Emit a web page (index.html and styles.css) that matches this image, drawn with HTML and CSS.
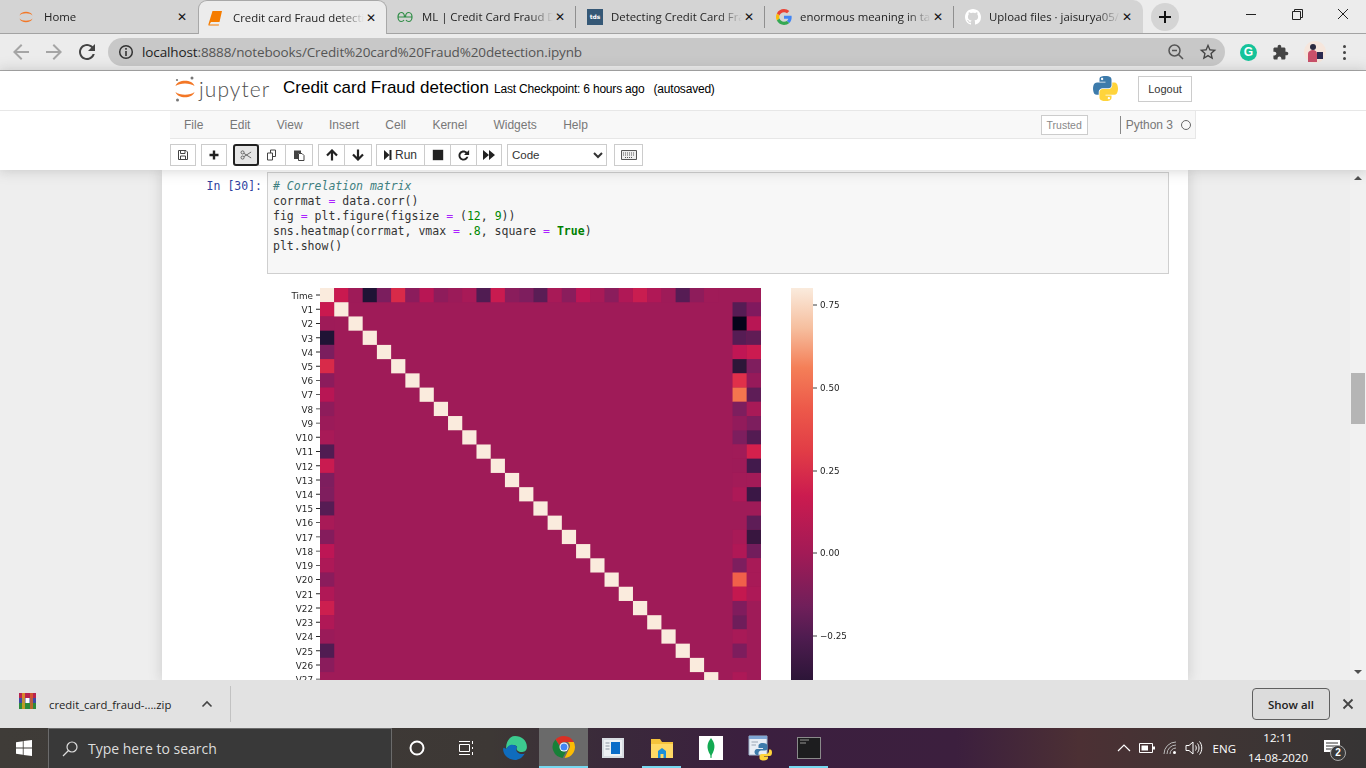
FILE: index.html
```html
<!DOCTYPE html>
<html lang="en">
<head>
<meta charset="utf-8">
<title>Credit card Fraud detection</title>
<link rel="stylesheet" href="styles.css">
</head>
<body>
<div class="tabstrip">
  <div class="tabs">
    <div class="tab first">
      <svg class="fav" viewBox="0 0 16 16"><path d="M1.5 6.5C3 1.5 13 1.500 14.500 6.500C12 3.500 4 3.500 1.500 6.500Z M1.500 9.500C3 14.500 13 14.500 14.500 9.500C12 12.500 4 12.500 1.500 9.500Z" fill="#f37726"/></svg>
      <span class="tab-title">Home</span><span class="tab-x">✕</span>
    </div>
    <div class="tab active">
      <svg class="fav" viewBox="0 0 16 16"><path d="M4.500 1H14L11.500 12H3L1.500 14.500H11L10.800 15.500H1C.5 15.500 .2 15 .5 14L4.500 1Z" fill="#f57c00"/></svg>
      <span class="tab-title">Credit card Fraud detection</span><span class="tab-x">✕</span>
    </div>
    <div class="tab gfg">
      <svg class="fav" viewBox="0 0 16 16" fill="none" stroke="#2f8d46" stroke-width="1.200"><path d="M1 8H7.500C7.500 5 6 3.500 4.200 3.500S1 5.500 1 8 2.500 12.500 4.200 12.500C5.500 12.500 6.500 11.800 7 11"/><path d="M15 8H8.500C8.500 5 10 3.500 11.800 3.500S15 5.500 15 8 13.500 12.500 11.800 12.500C10.500 12.500 9.500 11.800 9 11"/></svg>
      <span class="tab-title">ML | Credit Card Fraud Detection</span><span class="tab-x">✕</span>
    </div>
    <i class="tab-sep"></i>
    <div class="tab">
      <span class="tds"><span>tds</span></span>
      <span class="tab-title">Detecting Credit Card Fraud</span><span class="tab-x">✕</span>
    </div>
    <i class="tab-sep"></i>
    <div class="tab">
      <svg class="fav" viewBox="0 0 48 48"><path fill="#ea4335" d="M24 9.500c3.500 0 6.700 1.300 9.100 3.400l6.800-6.800C35.800 2.400 30.200 0 24 0 14.600 0 6.500 5.400 2.600 13.200l7.900 6.200C12.400 13.700 17.700 9.500 24 9.500z"/><path fill="#4285f4" d="M47 24.500c0-1.600-.2-3.100-.4-4.500H24v9h12.900c-.6 3-2.200 5.500-4.700 7.200l7.700 6C44.400 37.900 47 31.800 47 24.500z"/><path fill="#fbbc05" d="M10.500 28.600c-.5-1.500-.8-3-.8-4.600s.3-3.200.8-4.600l-7.900-6.200C.9 16.500 0 20.100 0 24s.9 7.500 2.600 10.800l7.900-6.200z"/><path fill="#34a853" d="M24 48c6.500 0 11.900-2.100 15.900-5.800l-7.700-6c-2.200 1.400-4.900 2.300-8.200 2.300-6.300 0-11.600-4.200-13.500-9.900l-7.900 6.200C6.500 42.600 14.600 48 24 48z"/></svg>
      <span class="tab-title">enormous meaning in tamil</span><span class="tab-x">✕</span>
    </div>
    <i class="tab-sep"></i>
    <div class="tab">
      <svg class="fav" viewBox="0 0 16 16"><path fill="#fff" d="M8 0C3.580 0 0 3.580 0 8c0 3.540 2.290 6.530 5.470 7.590.4.070.55-.17.55-.38 0-.19-.01-.82-.01-1.490-2.010.37-2.530-.49-2.690-.94-.09-.23-.48-.94-.82-1.130-.28-.15-.68-.52-.01-.53.63-.01 1.080.58 1.230.82.72 1.210 1.870.87 2.330.66.07-.52.28-.87.51-1.070-1.780-.2-3.640-.89-3.640-3.950 0-.87.31-1.590.82-2.150-.08-.2-.36-1.020.08-2.120 0 0 .67-.21 2.200.82.64-.18 1.320-.27 2-.27.68 0 1.360.09 2 .27 1.530-1.040 2.200-.82 2.200-.82.44 1.100.16 1.920.08 2.120.51.56.82 1.270.82 2.150 0 3.070-1.870 3.750-3.650 3.950.29.25.54.73.54 1.480 0 1.070-.01 1.930-.01 2.200 0 .21.15.46.55.38A8.013 8.013 0 0016 8c0-4.420-3.580-8-8-8z"/></svg>
      <span class="tab-title">Upload files · jaisurya05/Credit</span><span class="tab-x">✕</span>
    </div>
  </div>
  <div class="newtab"><svg viewBox="0 0 12 12" width="12" height="12"><path d="M6 0V12M0 6H12" stroke="#111" stroke-width="2"/></svg></div>
  <div class="winctl">
    <svg width="46" height="16" viewBox="0 0 46 16"><path d="M18 8.500H28" stroke="#222"/></svg>
    <svg width="46" height="16" viewBox="0 0 46 16" fill="none" stroke="#222"><path d="M18.500 5.500H26.500V13.500H18.500Z M20.500 5V3.500H28.500V11.500H27"/></svg>
    <svg width="46" height="16" viewBox="0 0 46 16" fill="none" stroke="#222"><path d="M18 3L28 13M28 3L18 13"/></svg>
  </div>
</div>

<div class="urlbar">
  <svg class="nav dim" viewBox="0 0 24 24"><path d="M20 11H7.830l5.590-5.590L12 4l-8 8 8 8 1.410-1.410L7.830 13H20v-2z"/></svg>
  <svg class="nav dim" viewBox="0 0 24 24"><path d="M4 11h12.170l-5.590-5.590L12 4l8 8-8 8-1.410-1.410L16.170 13H4v-2z"/></svg>
  <svg class="nav" viewBox="0 0 24 24"><path d="M17.650 6.350C16.200 4.900 14.210 4 12 4c-4.420 0-7.990 3.580-7.990 8s3.570 8 7.990 8c3.730 0 6.840-2.550 7.730-6h-2.080c-.82 2.330-3.040 4-5.650 4-3.310 0-6-2.690-6-6s2.690-6 6-6c1.660 0 3.140.69 4.220 1.780L13 11h7V4l-2.350 2.350z"/></svg>
  <div class="omnibox">
    <svg class="info" viewBox="0 0 16 16"><circle cx="8" cy="8" r="6.300" fill="none" stroke="#333" stroke-width="1.500"/><path d="M8 7V12M8 4V5.700" stroke="#333" stroke-width="1.600"/></svg>
    <span class="url"><b>localhost</b>:8888/notebooks/Credit%20card%20Fraud%20detection.ipynb</span>
    <svg class="omni-ic" viewBox="0 0 18 18" fill="none" stroke="#555" stroke-width="1.500"><circle cx="7.500" cy="7.500" r="5.500"/><path d="M11.500 11.500L16 16M5 7.500H10"/></svg>
    <svg class="omni-ic star" viewBox="0 0 24 24"><path fill="#444" d="M22 9.240l-7.190-.62L12 2 9.190 8.630 2 9.240l5.460 4.730L5.820 21 12 17.270 18.180 21l-1.630-7.030L22 9.240zM12 15.400l-3.760 2.270 1-4.280-3.320-2.880 4.380-.38L12 6.100l1.710 4.040 4.380.38-3.320 2.880 1 4.280L12 15.400z"/></svg>
  </div>
  <div class="ext grammarly"><span>G</span></div>
  <svg class="ext-ic" viewBox="0 0 24 24"><path fill="#444" d="M20.500 11H19V7c0-1.100-.9-2-2-2h-4V3.500C13 2.120 11.880 1 10.500 1S8 2.120 8 3.500V5H4c-1.100 0-1.990.9-1.990 2v3.800H3.500c1.490 0 2.700 1.210 2.700 2.700s-1.210 2.700-2.700 2.700H2V20c0 1.100.9 2 2 2h3.800v-1.500c0-1.490 1.210-2.700 2.700-2.700 1.490 0 2.700 1.210 2.700 2.700V22H17c1.100 0 2-.9 2-2v-4h1.500c1.380 0 2.500-1.120 2.500-2.500S21.880 11 20.500 11z"/></svg>
  <svg class="avatar" viewBox="0 0 22 22"><circle cx="11" cy="11" r="11" fill="#f6e6dc"/><circle cx="9" cy="6" r="3" fill="#2b2a40"/><path d="M4 21V13C4 10 7 9 9 9S13 10 13 13V21Z" fill="#c9506a"/><path d="M13 11H19V18H13Z" fill="#2b2a50"/></svg>
  <div class="dots"><i></i><i></i><i></i></div>
</div>

<header class="nb-header">
  <div class="hdr-row">
    <div class="hdr-inner title-row">
      <svg class="jlogo" viewBox="0 0 22 28"><path d="M1.500 11C3.500 4 18.500 4 20.500 11C16.500 7.500 5.500 7.500 1.500 11Z M1.500 17C3.500 24 18.500 24 20.500 17C16.500 20.500 5.500 20.500 1.500 17Z" fill="#f37726"/><circle cx="18" cy="3" r="1.500" fill="#777"/><circle cx="3" cy="5" r="1.100" fill="#777"/><circle cx="3.500" cy="25" r="1.500" fill="#777"/></svg>
      <span class="jword">jupyter</span>
      <span class="nb-name">Credit card Fraud detection</span>
      <span class="checkpoint">Last Checkpoint: 6 hours ago</span>
      <span class="checkpoint saved">(autosaved)</span>
      <svg class="pylogo" viewBox="0 0 111 112"><path fill="#3d7bab" d="M54.900 0C50.300 0 45.900.4 42 1.100 30.600 3.100 28.500 7.400 28.500 15.200v10.400h27v3.500H18.300c-7.800 0-14.700 4.700-16.800 13.700-2.500 10.300-2.600 16.700 0 27.400 1.900 8 6.500 13.700 14.300 13.700h9.300V71.500c0-8.900 7.700-16.800 16.800-16.800h27c7.500 0 13.500-6.200 13.500-13.700V15.200c0-7.300-6.200-12.800-13.500-14.100C64.500.4 59.500 0 54.900 0zM40.300 8.300c2.800 0 5.100 2.300 5.100 5.100s-2.300 5.100-5.100 5.100-5.100-2.300-5.100-5.100 2.300-5.100 5.100-5.100z"/><path fill="#ffd43b" d="M85.800 29.100v12c0 9.300-7.900 17.100-16.800 17.100H42C34.600 58.200 28.500 64.500 28.500 72v25.700c0 7.300 6.400 11.600 13.500 13.700 8.500 2.500 16.700 3 27 0 6.800-2 13.500-5.900 13.500-13.700V87.400H55.500V84h40.500c7.800 0 10.800-5.500 13.500-13.700 2.800-8.500 2.700-16.600 0-27.400-1.900-7.800-5.600-13.800-13.500-13.800zM70.600 94.300c2.800 0 5.100 2.300 5.100 5.100s-2.300 5.100-5.100 5.100-5.100-2.300-5.100-5.100 2.300-5.100 5.100-5.100z"/></svg>
      <span class="logout">Logout</span>
    </div>
  </div>
  <div class="hdr-inner menubar">
    <span class="menu-item">File</span><span class="menu-item">Edit</span><span class="menu-item">View</span><span class="menu-item">Insert</span><span class="menu-item">Cell</span><span class="menu-item">Kernel</span><span class="menu-item">Widgets</span><span class="menu-item">Help</span>
    <span class="trusted">Trusted</span>
    <span class="kernel">Python 3</span>
    <i class="kernel-dot"></i>
  </div>
  <div class="hdr-inner nb-tools">
    <div class="grp g5"><span class="btn w26"><svg viewBox="0 0 12 12"><path d="M1.500 1.500H9L10.500 3V10.500H1.500Z M3.500 1.500V4.500H8V1.500 M3.500 10.500V7H8.500V10.500" fill="none" stroke="#444"/></svg></span></div>
    <div class="grp g6"><span class="btn w26"><svg viewBox="0 0 12 12"><path d="M6 1.500V10.500M1.500 6H10.500" stroke="#222" stroke-width="2.400"/></svg></span></div>
    <div class="grp g5">
      <span class="btn w26 focus"><svg viewBox="0 0 14 12" fill="none" stroke="#555"><circle cx="3" cy="3" r="1.800"/><circle cx="3" cy="9" r="1.800"/><path d="M4.500 4L13 9.500M4.500 8L13 2.500"/></svg></span>
      <span class="btn w28"><svg viewBox="0 0 12 12" fill="#fff" stroke="#444"><path d="M4.500 1H9.500V7.500H4.500Z"/><path d="M1.500 4H6.500V11H1.500Z"/></svg></span>
      <span class="btn w28"><svg viewBox="0 0 12 12"><path d="M1 1.500H8V4H5V10H1Z" fill="#444"/><path d="M5.500 4.500H9L11 6.500V11.500H5.500Z" fill="#fff" stroke="#444"/></svg></span>
    </div>
    <div class="grp g4">
      <span class="btn w27"><svg viewBox="0 0 12 12"><path d="M1 6.500L6 1.500L11 6.500M6 2V11.500" fill="none" stroke="#222" stroke-width="2.200"/></svg></span>
      <span class="btn w28"><svg viewBox="0 0 12 12"><path d="M1 5.500L6 10.500L11 5.500M6 10V.5" fill="none" stroke="#222" stroke-width="2.200"/></svg></span>
    </div>
    <div class="grp g5">
      <span class="btn run"><svg viewBox="0 0 8 12"><path d="M0 1L5.500 6L0 11ZM5.500 1H7.500V11H5.500Z" fill="#222"/></svg>Run</span>
      <span class="btn w27"><svg viewBox="0 0 12 12"><path d="M.8 .8H11.200V11.200H.8Z" fill="#222"/></svg></span>
      <span class="btn w27"><svg class="redo" viewBox="0 0 24 24"><path d="M17.650 6.350C16.200 4.900 14.210 4 12 4c-4.420 0-7.990 3.580-7.990 8s3.570 8 7.990 8c3.730 0 6.840-2.550 7.730-6h-3.080c-.82 1.330-2.540 3-4.650 3-2.810 0-5-2.190-5-5s2.190-5 5-5c1.660 0 2.640.69 3.220 1.280L13 11h8V3l-3.350 3.350z" fill="#222"/></svg></span>
      <span class="btn w26"><svg viewBox="0 0 12 12"><path d="M0 1L6 6V1L12 6L6 11V6L0 11Z" fill="#222"/></svg></span>
    </div>
    <select class="celltype"><option>Code</option></select>
    <span class="btn kbd"><svg viewBox="0 0 16 10"><path d="M.5 .5H15.500V9.500H.5Z" fill="#eee" stroke="#555"/><path d="M2 3H14M2 5H14M4 7.500H12" stroke="#555" stroke-dasharray="1 1"/></svg></span>
  </div>
</header>

<div class="main">
  <div class="viewport">
    <div class="notebook">
      <div class="cell">
        <div class="prompt">In [30]:</div>
        <pre class="input"><span class="c"># Correlation matrix</span>
corrmat <span class="o">=</span> data.corr()
fig <span class="o">=</span> plt.figure(figsize <span class="o">=</span> (<span class="n">12</span>, <span class="n">9</span>))
sns.heatmap(corrmat, vmax <span class="o">=</span> <span class="n">.8</span>, square <span class="o">=</span> <span class="k">True</span>)
plt.show()
</pre>
      </div>
      <svg class="figure" width="600" height="460" viewBox="0 0 600 460">
        <defs>
          <linearGradient id="rocket" gradientUnits="userSpaceOnUse" x1="0" y1="8" x2="0" y2="450">
            <stop offset="0" stop-color="#faebdd"/>
            <stop offset=".09" stop-color="#f6bf9f"/>
            <stop offset=".18" stop-color="#f47f58"/>
            <stop offset=".27" stop-color="#ed5a4a"/>
            <stop offset=".37" stop-color="#e13c46"/>
            <stop offset=".47" stop-color="#cb1b4f"/>
            <stop offset=".6" stop-color="#a21a56"/>
            <stop offset=".72" stop-color="#701f5a"/>
            <stop offset=".79" stop-color="#4f1c50"/>
            <stop offset=".89" stop-color="#2b1537"/>
            <stop offset="1" stop-color="#03051a"/>
          </linearGradient>
        </defs>
        <g class="tick-labels">
          <text x="46" y="18.800">Time</text><text x="46" y="33">V1</text><text x="46" y="47.300">V2</text><text x="46" y="61.500">V3</text><text x="46" y="75.700">V4</text><text x="46" y="89.900">V5</text><text x="46" y="104.200">V6</text><text x="46" y="118.400">V7</text><text x="46" y="132.600">V8</text><text x="46" y="146.900">V9</text><text x="46" y="161.100">V10</text><text x="46" y="175.300">V11</text><text x="46" y="189.500">V12</text><text x="46" y="203.800">V13</text><text x="46" y="218">V14</text><text x="46" y="232.200">V15</text><text x="46" y="246.400">V16</text><text x="46" y="260.700">V17</text><text x="46" y="274.900">V18</text><text x="46" y="289.100">V19</text><text x="46" y="303.400">V20</text><text x="46" y="317.600">V21</text><text x="46" y="331.800">V22</text><text x="46" y="346">V23</text><text x="46" y="360.300">V24</text><text x="46" y="374.500">V25</text><text x="46" y="388.700">V26</text><text x="46" y="402.900">V27</text><text x="46" y="417.200">V28</text><text x="46" y="431.400">Amount</text><text x="46" y="445.600">Class</text>
        </g>
        <line class="ticks" x1="51" x2="51" y1="14.600" y2="449"/>
        <svg class="hm" x="53" y="8" width="441" height="441" viewBox="0 0 31 31">
          <rect class="hm-base" x="0" y="0"/>
          <g>
            <rect x="0" y="0" fill="#faebdd"/><rect x="1" y="0" fill="#c9194f"/><rect x="2" y="0" fill="#9e1b58"/><rect x="3" y="0" fill="#1f1335"/><rect x="4" y="0" fill="#7b1e5e"/><rect x="5" y="0" fill="#d82a49"/><rect x="6" y="0" fill="#8b1c5c"/><rect x="7" y="0" fill="#b81654"/><rect x="8" y="0" fill="#8e1c5b"/><rect x="9" y="0" fill="#9b1b59"/><rect x="10" y="0" fill="#a81a57"/><rect x="11" y="0" fill="#501c52"/><rect x="12" y="0" fill="#c91b50"/><rect x="13" y="0" fill="#8a1d5c"/><rect x="14" y="0" fill="#7e1e5e"/><rect x="15" y="0" fill="#5a1d55"/><rect x="16" y="0" fill="#a81a57"/><rect x="17" y="0" fill="#8a1d5c"/><rect x="18" y="0" fill="#bd1655"/><rect x="19" y="0" fill="#a81a57"/><rect x="20" y="0" fill="#8a1d5c"/><rect x="21" y="0" fill="#b01856"/><rect x="22" y="0" fill="#c91d50"/><rect x="23" y="0" fill="#b01856"/><rect x="24" y="0" fill="#9e1b58"/><rect x="25" y="0" fill="#561c54"/><rect x="26" y="0" fill="#8e1c5b"/><rect x="27" y="0" fill="#a01b58"/>
            <rect x="0" y="1" fill="#c9194f"/><rect x="0" y="2" fill="#9e1b58"/><rect x="0" y="3" fill="#1f1335"/><rect x="0" y="4" fill="#7b1e5e"/><rect x="0" y="5" fill="#d82a49"/><rect x="0" y="6" fill="#8b1c5c"/><rect x="0" y="7" fill="#b81654"/><rect x="0" y="8" fill="#8e1c5b"/><rect x="0" y="9" fill="#9b1b59"/><rect x="0" y="10" fill="#a81a57"/><rect x="0" y="11" fill="#501c52"/><rect x="0" y="12" fill="#c91b50"/><rect x="0" y="13" fill="#7d1e5e"/><rect x="0" y="14" fill="#7f1e5e"/><rect x="0" y="15" fill="#561c54"/><rect x="0" y="16" fill="#a81a57"/><rect x="0" y="17" fill="#841c5c"/><rect x="0" y="18" fill="#bd1655"/><rect x="0" y="19" fill="#ad1957"/><rect x="0" y="20" fill="#8a1c5c"/><rect x="0" y="21" fill="#b01856"/><rect x="0" y="22" fill="#cc1f4f"/><rect x="0" y="23" fill="#b01856"/><rect x="0" y="24" fill="#9a1b59"/><rect x="0" y="25" fill="#501c52"/><rect x="0" y="26" fill="#8a1c5c"/>
            <rect x="29" y="1" fill="#561c54"/><rect x="30" y="1" fill="#80195e"/><rect x="29" y="2" fill="#05041a"/><rect x="30" y="2" fill="#b81654"/><rect x="29" y="3" fill="#561c54"/><rect x="30" y="3" fill="#601c55"/><rect x="29" y="4" fill="#c01654"/><rect x="30" y="4" fill="#cb1b50"/><rect x="29" y="5" fill="#2d1638"/><rect x="30" y="5" fill="#7f1e5e"/><rect x="29" y="6" fill="#e0304a"/><rect x="30" y="6" fill="#961a5a"/><rect x="29" y="7" fill="#f4764e"/><rect x="30" y="7" fill="#5e1d57"/><rect x="29" y="8" fill="#7d1e5e"/><rect x="30" y="8" fill="#a81a57"/><rect x="29" y="9" fill="#921b5b"/><rect x="30" y="9" fill="#7d1e5e"/><rect x="29" y="10" fill="#7d1e5e"/><rect x="30" y="10" fill="#531b52"/><rect x="29" y="11" fill="#a01b58"/><rect x="30" y="11" fill="#d4204c"/><rect x="29" y="12" fill="#9e1b58"/><rect x="30" y="12" fill="#421a4c"/><rect x="29" y="13" fill="#a31b58"/><rect x="30" y="13" fill="#a31b58"/><rect x="29" y="14" fill="#ad1957"/><rect x="30" y="14" fill="#3a1745"/><rect x="30" y="16" fill="#5e1d57"/><rect x="29" y="17" fill="#a81a57"/><rect x="30" y="17" fill="#38163f"/><rect x="29" y="18" fill="#b01856"/><rect x="30" y="18" fill="#721d5c"/><rect x="29" y="19" fill="#7d1e5e"/><rect x="30" y="19" fill="#a81a57"/><rect x="29" y="20" fill="#f0604a"/><rect x="30" y="20" fill="#a81a57"/><rect x="29" y="21" fill="#c4184f"/><rect x="30" y="21" fill="#ad1957"/><rect x="29" y="22" fill="#801c5d"/><rect x="29" y="23" fill="#6e1d5a"/><rect x="29" y="24" fill="#a81a57"/><rect x="29" y="25" fill="#7d1d5d"/><rect x="29" y="27" fill="#ad1957"/>
          </g>
          <g fill="#faebdd">
            <rect x="1" y="1"/><rect x="2" y="2"/><rect x="3" y="3"/><rect x="4" y="4"/><rect x="5" y="5"/><rect x="6" y="6"/><rect x="7" y="7"/><rect x="8" y="8"/><rect x="9" y="9"/><rect x="10" y="10"/><rect x="11" y="11"/><rect x="12" y="12"/><rect x="13" y="13"/><rect x="14" y="14"/><rect x="15" y="15"/><rect x="16" y="16"/><rect x="17" y="17"/><rect x="18" y="18"/><rect x="19" y="19"/><rect x="20" y="20"/><rect x="21" y="21"/><rect x="22" y="22"/><rect x="23" y="23"/><rect x="24" y="24"/><rect x="25" y="25"/><rect x="26" y="26"/><rect x="27" y="27"/><rect x="28" y="28"/><rect x="29" y="29"/><rect x="30" y="30"/>
          </g>
        </svg>
        <rect x="524" y="8" width="22" height="442" fill="url(#rocket)"/>
        <path class="cb-ticks" d="M546 25H550M546 108H550M546 191H550M546 273H550M546 356H550"/>
        <g class="cb-labels"><text x="553" y="28.200">0.75</text><text x="553" y="111.200">0.50</text><text x="553" y="194.200">0.25</text><text x="553" y="276.200">0.00</text><text x="553" y="359.200">−0.25</text></g>
      </svg>
    </div>
  </div>
  <div class="scrollbar">
    <i class="arrow up"></i>
    <div class="track"><div class="thumb"></div></div>
    <i class="arrow down"></i>
  </div>
</div>

<div class="downloads">
  <svg class="rar" viewBox="0 0 17 16"><path d="M0 0H17V5H0Z" fill="#b8234f"/><path d="M0 5H17V10H0Z" fill="#3d4aa8"/><path d="M0 10H17V16H0Z" fill="#2d8a3c"/><path d="M3 0H6V16H3Z" fill="#e0a020" opacity=".8"/><path d="M11 0H14V16H11Z" fill="#d8602a" opacity=".8"/><path d="M6.500 5H10.500V10H6.500Z" fill="#fff"/></svg>
  <span class="dl-name">credit_card_fraud-....zip</span>
  <svg class="dl-caret" viewBox="0 0 12 8"><path d="M1.500 6.500L6 2L10.500 6.500" fill="none" stroke="#444" stroke-width="1.600"/></svg>
  <i class="dl-sep"></i>
  <span class="showall">Show all</span>
  <svg class="dl-x" viewBox="0 0 12 12"><path d="M1.500 1.500L10.500 10.500M10.500 1.500L1.500 10.500" stroke="#444" stroke-width="1.800"/></svg>
</div>

<footer class="taskbar">
  <div class="start"><svg viewBox="0 0 16 16" width="16" height="16"><path fill="#fff" d="M0 2.200L6.800 1.200V7.600H0Z M7.600 1.100L16 0V7.600H7.600Z M0 8.400H6.800V14.800L0 13.800Z M7.600 8.400H16V16L7.600 14.900Z"/></svg></div>
  <div class="search">
    <svg viewBox="0 0 16 16" width="16" height="16" fill="none" stroke="#ddd" stroke-width="1.200"><circle cx="10" cy="6" r="5"/><path d="M6.500 9.500L1 15"/></svg>
    <span>Type here to search</span>
  </div>
  <div class="slot"><svg viewBox="0 0 16 16" width="16" height="16"><circle cx="8" cy="8" r="6.500" fill="none" stroke="#fff" stroke-width="2"/></svg></div>
  <div class="slot"><svg viewBox="0 0 18 18" width="18" height="18" fill="none" stroke="#fff"><path d="M2.500 5.500H12.500V12.500H2.500Z M2 2.500H13M2 15.500H13 M15.500 2V5M15.500 8V10M15.500 13V16"/></svg></div>
  <div class="slot"><svg viewBox="0 0 24 24" width="26" height="26"><path d="M12 1C18 1 23 5 23 11C23 15 19 16.500 16 15.500C13 14.500 13 12 14 11C12 8 6 9 4 13C3 9 6 1 12 1Z" fill="#3ccb8f"/><path d="M4 13C5.500 8.500 11 8 14 11C12.500 13 13 16 16 17C18 18 20 17.500 21 17C19 21 15 23 12 23C6 23 1 18.500 1 13C1.500 11 2 12 4 13Z" fill="#0f6cbd"/></svg></div>
  <div class="slot chrome"><svg viewBox="0 0 24 24" width="24" height="24"><path d="M12 1A11 11 0 0 1 21.800 7H12A5 5 0 0 0 7.500 10L3.500 4.500A11 11 0 0 1 12 1Z" fill="#d93025"/><path d="M21.800 7A11 11 0 0 1 12.500 23L17 14A5 5 0 0 0 16 7Z" fill="#fbbc04"/><path d="M3.500 4.500L8 12A5 5 0 0 0 14 16.500L10.500 22.900A11 11 0 0 1 3.500 4.500Z" fill="#188038"/><circle cx="12" cy="12" r="4.500" fill="#fff"/><circle cx="12" cy="12" r="3.500" fill="#4285f4"/></svg></div>
  <div class="slot"><svg viewBox="0 0 22 20" width="22" height="20"><path d="M0 0H22V20H0Z" fill="#d8dde2"/><path d="M2 2H20V18H2Z" fill="#eef1f4"/><path d="M9 4H18V16H9Z" fill="#0a6cc8"/><path d="M3.500 5H7.500M3.500 8H7.500M3.500 11H7.500" stroke="#8a94a0" stroke-width="1.200"/></svg></div>
  <div class="slot on"><svg viewBox="0 0 22 22" width="22" height="22"><path d="M0 2H9L11 5H22V21H0Z" fill="#f5c33b"/><path d="M0 7H22V21H0Z" fill="#ffd965"/><path d="M7 14L11 11L15 14V21H7Z" fill="#1c8fd8"/><path d="M9.500 17H12.500V21H9.500Z" fill="#ffd965"/></svg></div>
  <div class="slot"><svg viewBox="0 0 24 24" width="24" height="24"><path d="M0 0H24V24H0Z" fill="#fff"/><path d="M12 2C16 7 17 12 12.700 19L12.500 22H11.500L11.300 19C7 12 8 7 12 2Z" fill="#13aa52"/></svg></div>
  <div class="slot"><svg viewBox="0 0 24 26" width="24" height="26"><path d="M1 1H19V20H1Z" fill="#e8eef5" stroke="#9fb4cc"/><path d="M1 1H19V4H1Z" fill="#7ea6d4"/><path d="M3.500 7H10M3.500 10H8" stroke="#9aa6b4"/><path d="M15 8C11 8 10.500 10 10.500 11V13H15V14H9C7.500 14 6.500 15.500 6.500 17S7.500 20 9 20H10.500V18C10.500 16.500 12 15.500 13 15.500H17C18.500 15.500 19.500 14.500 19.500 13V11C19.500 9 17.500 8 15 8Z" fill="#3d7bab"/><path d="M21 14.500V16C21 18 19.500 19 18 19H14C12.500 19 11.500 20 11.500 21V23C11.500 25 14 25.500 16 25.500S20 24.500 20 23V21.500H16V21H21.500C23 21 24 20 24 17.500S23 14.500 21.500 14.500Z" fill="#ffd43b"/></svg></div>
  <div class="slot on"><svg class="cmd" viewBox="0 0 24 22" width="24" height="22"><path d="M0 0H24V22H0Z" fill="#8a8a8a"/><path d="M1 1H23V21H1Z" fill="#1d1d1f"/><path d="M3 3H12M3 6H9" stroke="#6e6e6e" stroke-width="1.500"/></svg></div>
  <div class="tray">
    <svg viewBox="0 0 14 8" width="14" height="8"><path d="M1 7L7 1L13 7" fill="none" stroke="#fff" stroke-width="1.200"/></svg>
    <svg viewBox="0 0 16 10" width="16" height="10"><path d="M.5 .5H13.500V9.500H.5Z" fill="none" stroke="#fff"/><path d="M2.500 2.500H9V7.500H2.500Z M14 3.500H16V6.500H14Z" fill="#fff"/></svg>
    <svg viewBox="0 0 14 14" width="14" height="14" fill="none" stroke="#bbb"><path d="M1 13A12 12 0 0 1 13 1M4 13A9 9 0 0 1 13 4M7 13A6 6 0 0 1 13 7"/><circle cx="11.500" cy="11.500" r="1.500" fill="#fff" stroke="none"/></svg>
    <svg viewBox="0 0 18 16" width="18" height="16" fill="none" stroke="#fff"><path d="M1 5.500H4L8 2V14L4 10.500H1Z M10.500 5.500C11.500 7 11.500 9 10.500 10.500M12.500 3.500C14.500 6 14.500 10 12.500 12.500M14.500 1.500C17.500 5 17.500 11 14.500 14.500"/></svg>
    <span class="eng">ENG</span>
    <div class="clock"><span>12:11</span><span>14-08-2020</span></div>
    <div class="notify">
      <svg viewBox="0 0 16 16" width="16" height="16"><path d="M0 0H16V12H0Z" fill="#fff"/><path d="M2 3H14M2 6H14M2 9H10" stroke="#333"/></svg>
      <span class="badge">2</span>
    </div>
  </div>
</footer>
</body>
</html>
```
FILE: styles.css
```css
* { box-sizing: border-box; }
html, body { margin: 0; height: 100%; overflow: hidden; }
body { display: flex; flex-direction: column; width: 1366px; height: 768px; font-family: "Liberation Sans", Arial, sans-serif; background: #fff; color: #000; }
i { display: block; font-style: normal; }

/* tab strip */
.tabstrip { display: flex; align-items: stretch; height: 34px; background: #ececec; border-bottom: 1px solid #a3a3a3; flex: none; }
.tabs { display: flex; align-items: stretch; background: #d4d4d4; border-top-right-radius: 10px; width: 1143px; }
.tab { display: flex; align-items: center; width: 188px; padding: 0 8px 0 11px; position: relative; font: 11.400px "Open Sans", sans-serif; color: #222; }
.tab.first { width: 197px; padding-left: 18px; }
.tab.active { background: #ececec; border: 1px solid #a8a8a8; border-bottom: 0; border-radius: 9px 9px 0 0; margin-left: 1px; width: 189px; height: 34px; padding-left: 9px; }
.tab.gfg { padding-left: 10px; }
.tab-sep { width: 1px; height: 22px; background: #8f8f8f; align-self: center; }
.fav { width: 16px; height: 16px; flex: none; margin-right: 8px; }
.tab.first .fav { margin-right: 10px; }
.tab.active .fav, .tab.gfg .fav { margin-right: 9px; }
.tab-title { flex: 1; min-width: 0; white-space: nowrap; overflow: hidden; -webkit-mask-image: linear-gradient(to right, #000 82%, transparent 100%); mask-image: linear-gradient(to right, #000 82%, transparent 100%); }
.tab-x { flex: none; width: 14px; font-size: 12px; font-weight: 700; text-align: center; color: #111; font-family: "DejaVu Sans", sans-serif; }
.tds { width: 16px; height: 16px; flex: none; margin-right: 8px; background: #355876; color: #fff; font: 700 6px "DejaVu Sans", sans-serif; display: flex; align-items: center; justify-content: center; }
.newtab { width: 28px; height: 28px; border-radius: 50%; background: #d4d4d4; margin: 3px 0 0 8px; display: flex; align-items: center; justify-content: center; }
.winctl { margin-left: auto; display: flex; align-items: flex-start; padding-top: 6px; }

/* address bar */
.urlbar { display: flex; align-items: center; height: 37px; background: #ececec; border-bottom: 1px solid #a9a9a9; flex: none; padding-left: 9px; }
.nav { width: 24px; height: 24px; fill: #444; margin-right: 9px; flex: none; }
.nav.dim { fill: #a5a5a5; }
.omnibox { display: flex; align-items: center; width: 1117px; height: 28px; background: #c8c8c8; border-radius: 14px; padding: 0 7px 0 10px; }
.info { width: 16px; height: 16px; flex: none; margin-right: 8px; }
.url { font: 13.500px "Open Sans", sans-serif; letter-spacing: -.12px; color: #555; flex: 1; white-space: nowrap; }
.url b { font-weight: 400; color: #222; }
.omni-ic { width: 18px; height: 18px; flex: none; margin-right: 13px; }
.omni-ic.star { width: 20px; height: 20px; margin-right: 0; }
.ext { flex: none; }
.grammarly { width: 17px; height: 17px; border-radius: 50%; background: #15c39a; color: #fff; font: 700 12px "Liberation Sans", sans-serif; display: flex; align-items: center; justify-content: center; margin-left: 15px; }
.ext-ic { width: 17px; height: 17px; flex: none; margin-left: 15px; }
.avatar { width: 22px; height: 22px; flex: none; margin-left: 15px; }
.dots { display: flex; flex-direction: column; gap: 3px; margin-left: 17px; }
.dots i { width: 3px; height: 3px; border-radius: 50%; background: #444; }

/* notebook header */
.nb-header { flex: none; height: 99px; background: #fff; box-shadow: 0 0 12px 1px rgba(87, 87, 87, .25); position: relative; z-index: 2; }
.hdr-row { border-bottom: 1px solid #e7e7e7; height: 40px; }
.hdr-inner { width: 1026px; margin: 0 auto; display: flex; align-items: center; }
.title-row { height: 35px; padding-left: 4px; }
.jlogo { width: 22px; height: 28px; flex: none; }
.jword { font: 300 21px Lato, sans-serif; color: #4e4e4e; letter-spacing: 1.100px; margin-left: 3px; width: 84px; }
.nb-name { font-size: 17px; color: #000; margin-right: 5px; position: relative; top: -1px; }
.checkpoint { font-size: 12px; color: #000; letter-spacing: -.2px; }
.checkpoint.saved { margin-left: 9px; }
.pylogo { width: 25px; height: 25px; margin-left: auto; flex: none; }
.logout { width: 54px; height: 26px; border: 1px solid #ccc; margin-left: 20px; font-size: 11px; display: flex; align-items: center; justify-content: center; color: #333; margin-right: 4px; }
.menubar { height: 28px; background: #f8f8f8; border-bottom: 1px solid #e7e7e7; border-right: 1px solid #e7e7e7; padding-left: 0; }
.menu-item { font-size: 12px; color: #777; padding: 0 13.200px; }
.menu-item:first-child { padding-left: 14px; }
.trusted { margin-left: auto; height: 20px; width: 47px; border: 1px solid #ccc; font-size: 10.500px; color: #888; display: flex; align-items: center; justify-content: center; background: #fff; }
.kernel { font-size: 12px; color: #777; border-left: 1px solid #888; height: 18px; line-height: 18px; padding-left: 5px; margin-left: 32px; }
.kernel-dot { width: 10px; height: 10px; border-radius: 50%; border: 1.500px solid #666; margin: 0 4px 0 8px; }
.nb-tools { height: 22px; margin-top: 5px; }
.grp { display: flex; }
.g4 { margin-right: 4px; }
.g5 { margin-right: 5px; }
.g6 { margin-right: 6px; }
.btn { height: 22px; border: 1px solid #ccc; background: #fff; display: flex; align-items: center; justify-content: center; font-size: 12px; color: #333; flex: none; }
.grp .btn + .btn { margin-left: -1px; }
.btn svg { width: 12px; height: 12px; }
.btn svg.redo { width: 15px; height: 15px; }
.w26 { width: 26px; }
.w27 { width: 27px; }
.w28 { width: 28px; }
.btn.focus { background: #e6e6e6; border: 2px solid #222; border-radius: 3px; position: relative; }
.btn.run { width: 49px; gap: 3px; }
.btn.run svg { width: 8px; }
.celltype { width: 100px; height: 22px; border: 1px solid #ccc; background: #fff; font: 11.500px "Liberation Sans", sans-serif; color: #333; margin-right: 7px; padding: 0; border-radius: 0; }
.btn.kbd { width: 29px; }
.btn.kbd svg { width: 16px; height: 10px; }

/* page body */
.main { flex: 1; min-height: 0; display: flex; }
.viewport { flex: 1; min-width: 0; overflow: hidden; background: #eee; }
.notebook { width: 1026px; height: 100%; margin: 0 auto; background: #fff; padding-top: 2px; box-shadow: 0 0 12px 1px rgba(87, 87, 87, .2); }
.cell { display: flex; }
.prompt { width: 105px; padding: 7px 5px 0 0; text-align: right; font: 11.500px/15px "DejaVu Sans Mono", monospace; color: #303f9f; }
.input { margin: 0; width: 902px; height: 102px; background: #f7f7f7; border: 1px solid #cfcfcf; padding: 6px 5px; font: 11.500px/15px "DejaVu Sans Mono", monospace; color: #333; }
.c { color: #408080; font-style: italic; }
.o { color: #aa22ff; }
.n { color: #008800; }
.k { color: #008000; font-weight: 700; }
.figure { display: block; margin: 6px 0 0 105px; filter: blur(.3px); }
.tick-labels text { font: 8.800px "DejaVu Sans", sans-serif; fill: #262626; text-anchor: end; }
.ticks { stroke: #262626; stroke-width: 4; stroke-dasharray: .9 13.326; }
.hm rect { width: 1px; height: 1px; }
.hm .hm-base { width: 31px; height: 31px; fill: #9f1b58; }
.cb-ticks { stroke: #262626; stroke-width: .9; }
.cb-labels text { font: 8.800px "DejaVu Sans", sans-serif; fill: #262626; }

/* scrollbar */
.scrollbar { width: 16px; flex: none; background: #f1f1f1; display: flex; flex-direction: column; align-items: center; padding: 4px 0; }
.arrow { width: 0; height: 0; border-left: 4px solid transparent; border-right: 4px solid transparent; flex: none; margin: 2px 0; }
.arrow.up { border-bottom: 4px solid #505050; }
.arrow.down { border-top: 4px solid #505050; }
.track { flex: 1; width: 100%; }
.thumb { width: 14px; height: 51px; margin: 191px auto 0; background: #b5b5b5; }

/* downloads */
.downloads { flex: none; height: 48px; background: #e2e2e2; display: flex; align-items: center; padding-left: 19px; position: relative; }
.rar { width: 17px; height: 16px; margin-top: -6px; flex: none; }
.dl-name { font: 11.300px "Open Sans", sans-serif; color: #222; margin-left: 13px; width: 122px; white-space: nowrap; }
.dl-caret { width: 12px; height: 8px; margin-left: 30px; flex: none; }
.dl-sep { width: 1px; height: 36px; background: #c2c2c2; margin-left: 17px; }
.showall { margin-left: auto; width: 78px; height: 32px; border: 1px solid #5f5f5f; border-radius: 4px; background: #dcdcdc; font: 600 11.500px "Open Sans", sans-serif; color: #222; display: flex; align-items: center; justify-content: center; }
.dl-x { width: 12px; height: 12px; margin: 0 12px 0 12px; flex: none; }

/* taskbar */
.taskbar { flex: none; height: 40px; display: flex; align-items: stretch; background: linear-gradient(to right, #3f3c38 0, #3d3835 36%, #3a2a3a 44%, #3b1f3f 55%, #3c1f3e 70%, #4c3034 79%, #403534 88%, #363434 100%); color: #fff; }
.start { width: 48px; display: flex; align-items: center; justify-content: center; flex: none; }
.search { width: 344px; flex: none; background: #393939; border: 1px solid #6b6b6b; border-bottom: 0; display: flex; align-items: center; padding-left: 13px; gap: 10px; font: 14px "Open Sans", sans-serif; color: #ddd; }
.slot { width: 49px; flex: none; display: flex; align-items: center; justify-content: center; position: relative; }
.slot.chrome { background: #6a6a6a; border-bottom: 2px solid #76d8f0; }
.slot.on::after { content: ""; position: absolute; left: 5px; right: 5px; bottom: 0; height: 2px; background: #76d8f0; }
.tray { margin-left: auto; display: flex; align-items: center; gap: 8px; padding-right: 26px; }
.eng { font: 11.500px "Open Sans", sans-serif; margin-left: 2px; }
.clock { display: flex; flex-direction: column; align-items: center; font: 11.500px/20px "Open Sans", sans-serif; margin: 0 7px 0 3px; width: 62px; }
.notify { position: relative; width: 16px; height: 16px; }
.badge { position: absolute; left: 6px; top: 5px; width: 16px; height: 16px; border-radius: 50%; background: #3a3a3a; border: 1px solid #aaa; font: 700 10px/14px "Liberation Sans", sans-serif; text-align: center; }
```
